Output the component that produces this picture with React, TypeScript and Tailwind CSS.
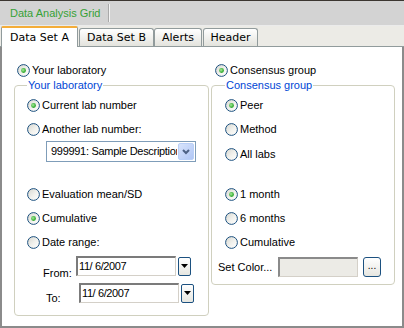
import React from 'react';

const Radio = ({ checked }: { checked?: boolean }) => (
  <svg width="13" height="13" viewBox="0 0 13 13" className="shrink-0">
    <defs>
      <linearGradient id="radioFill" x1="0" y1="0" x2="1" y2="1">
        <stop offset="0" stopColor="#d6d6cf" />
        <stop offset="0.55" stopColor="#f2f2ee" />
        <stop offset="1" stopColor="#ffffff" />
      </linearGradient>
      <radialGradient id="radioDot" cx="0.4" cy="0.4" r="0.6">
        <stop offset="0" stopColor="#a8ec9a" />
        <stop offset="1" stopColor="#21a121" />
      </radialGradient>
    </defs>
    <circle cx="6.5" cy="6.5" r="5.9" fill="url(#radioFill)" stroke="#1c5180" strokeWidth="1" />
    {checked && <circle cx="6.5" cy="6.5" r="2.4" fill="url(#radioDot)" />}
  </svg>
);

const Option = ({ label, checked, className = '' }: { label: string; checked?: boolean; className?: string }) => (
  <div className={`flex items-center h-[24px] ${className}`}>
    <Radio checked={checked} />
    <span className="ml-[2px] text-black">{label}</span>
  </div>
);

const DateBox = ({ value }: { value: string }) => (
  <div className="flex items-center">
    <div className="w-[100px] h-[20px] bg-white border-t-2 border-l-2 border-r border-b border-t-[#7b7b7b] border-l-[#7b7b7b] border-r-[#d4d0c8] border-b-[#d4d0c8] flex items-center pl-[1px] text-[11px] tracking-[-0.4px]">
      {value}
    </div>
    <div className="ml-[2px] w-[13px] h-[19px] rounded-[2px] border border-[#1c5180] bg-gradient-to-b from-white to-[#e6e6e0] flex items-center justify-center">
      <svg width="7" height="4" viewBox="0 0 7 4">
        <path d="M0 0 H7 L3.5 4 Z" fill="#000" />
      </svg>
    </div>
  </div>
);

export default function App() {
  return (
    <div className="w-[404px] h-[328px] flex flex-col bg-white overflow-hidden text-[11px] leading-[13px]" style={{ fontFamily: '"Liberation Sans", Arial, sans-serif' }}>
      {/* title strip */}
      <div className="h-[26px] shrink-0 border-t border-t-[#3b3631] border-b border-b-[#ebebeb] bg-[#d3d3d3] flex items-center">
        <div className="w-[108px] pl-[10px] text-[11px] text-[#36a136] whitespace-nowrap">Data Analysis Grid</div>
        <div className="h-[18px] w-[2px] border-l border-l-[#a9a9a9] border-r border-r-[#f4f4f4]" />
      </div>

      {/* tabs */}
      <div className="h-[21px] shrink-0 bg-[#ecebe6] border-b border-b-[#919b9c] flex items-end pl-[1px]" style={{ fontFamily: '"DejaVu Sans", Verdana, sans-serif' }}>
        <div className="w-[77px] h-[21px] -mb-px bg-white border-t-2 border-t-[#f4ad3a] border-l border-r border-l-[#919b9c] border-r-[#919b9c] rounded-t-[2px] flex items-center justify-center text-[11px] text-black z-10">
          Data Set A
        </div>
        {[
          ['Data Set B', 'w-[75px] ml-[1px]'],
          ['Alerts', 'w-[48px]'],
          ['Header', 'w-[55px] ml-[1px]'],
        ].map(([t, w]) => (
          <div key={t} className={`${w} h-[18px] border border-b-0 border-[#919b9c] rounded-t-[3px] bg-gradient-to-b from-white to-[#e3e3dd] flex items-center justify-center text-[11px] text-black`}>
            {t}
          </div>
        ))}
      </div>

      {/* content */}
      <div className="flex-1 border-l-2 border-r-2 border-b-2 border-[#8b8b8b] pl-[12px] pt-[15px] flex gap-[6px]">
        {/* left column */}
        <div className="w-[191px] flex flex-col">
          <div className="h-[16px] pl-[3px] flex items-center">
            <Radio checked />
            <span className="ml-[2px]">Your laboratory</span>
          </div>
          <fieldset className="border border-[#d0d0bf] rounded-[4px] px-[12px] pb-[12px]">
            <legend className="px-[1px] text-[#0046d5] leading-[14px]">Your laboratory</legend>
            <div className="pt-[1px]">
              <Option label="Current lab number" checked />
              <Option label="Another lab number:" />
              <div className="ml-[19px] w-[150px] h-[21px] border border-[#7f9db9] bg-white flex items-center justify-between pl-[4px] pr-[1px] text-[11px] tracking-[-0.3px]">
                <span className="whitespace-nowrap overflow-hidden w-[126px]">999991: Sample Description</span>
                <div className="w-[16px] h-[17px] rounded-[2px] border border-[#b9cff7] bg-gradient-to-br from-[#d8e4fc] to-[#b0c6f5] flex items-center justify-center">
                  <svg width="8" height="6" viewBox="0 0 8 6">
                    <path d="M1 1 L4 4 L7 1" stroke="#4d6185" strokeWidth="2" fill="none" />
                  </svg>
                </div>
              </div>
              <Option label="Evaluation mean/SD" className="mt-[20px]" />
              <Option label="Cumulative" checked />
              <Option label="Date range:" />
              <div className="mt-[2px] h-[20px] flex items-end">
                <div className="w-[49px] pl-[16px] -mb-[4px]">From:</div>
                <DateBox value="11/ 6/2007" />
              </div>
              <div className="mt-[7px] h-[20px] flex items-end">
                <div className="w-[52px] pl-[19px] -mb-[2px]">To:</div>
                <DateBox value="11/ 6/2007" />
              </div>
            </div>
          </fieldset>
        </div>

        {/* right column */}
        <div className="w-[179px] flex flex-col">
          <div className="h-[16px] pl-[4px] flex items-center">
            <Radio checked />
            <span className="ml-[2px]">Consensus group</span>
          </div>
          <fieldset className="border border-[#d0d0bf] rounded-[4px] px-[13px] pb-[7px]">
            <legend className="px-[1px] text-[#0046d5] leading-[14px]">Consensus group</legend>
            <div className="pt-[1px]">
              <Option label="Peer" checked />
              <Option label="Method" />
              <Option label="All labs" className="mt-[1px]" />
              <Option label="1 month" checked className="mt-[16px]" />
              <Option label="6 months" />
              <Option label="Cumulative" />
              <div className="mt-[3px] h-[20px] -ml-[7px] flex items-center">
                <span className="w-[60px] whitespace-nowrap">Set Color...</span>
                <div className="w-[80px] h-[20px] bg-[#ecebe6] border-t-2 border-l-2 border-r border-b border-t-[#8a8a8a] border-l-[#8a8a8a] border-r-[#d4d0c8] border-b-[#d4d0c8]" />
                <div className="ml-[5px] w-[18px] h-[20px] rounded-[3px] border border-[#1c5180] bg-gradient-to-b from-white to-[#e6e6e0] flex items-center justify-center text-[10px] leading-none pb-[2px]">
                  ...
                </div>
              </div>
            </div>
          </fieldset>
        </div>
      </div>
    </div>
  );
}
